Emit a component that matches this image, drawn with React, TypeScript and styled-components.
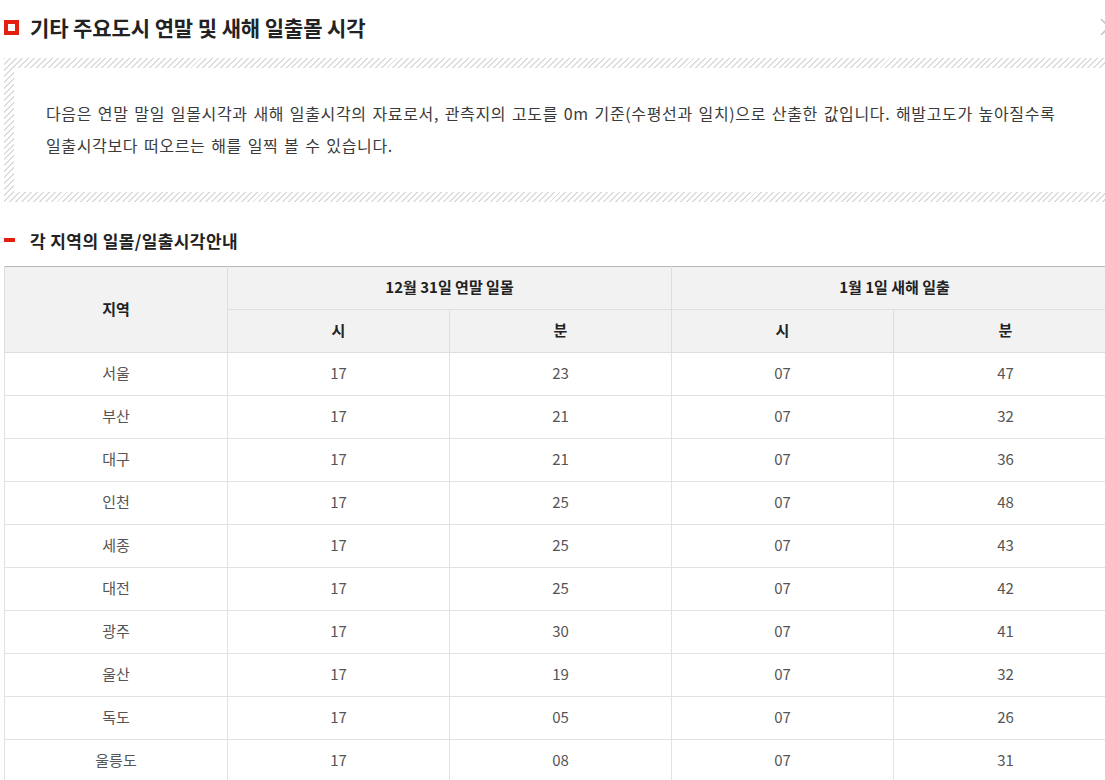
import React from 'react'
import styled, { createGlobalStyle } from 'styled-components'

const GlobalStyle = createGlobalStyle`
  body {
    margin: 0;
    background: #fff;
    font-family: "Noto Sans CJK KR", "Noto Sans", sans-serif;
    color: #333;
  }
`

const Page = styled.div`
  width: 1105px;
  height: 780px;
  overflow: hidden;
  padding-left: 4px;
  box-sizing: border-box;
`

const TitleBar = styled.div`
  position: relative;
  display: flex;
  align-items: center;
  height: 54px;
`

const TitleIcon = styled.span`
  width: 15px;
  height: 15px;
  box-sizing: border-box;
  border: 4px solid #e3200f;
  margin-right: 11px;
  flex-shrink: 0;
`

const Title = styled.h2`
  margin: 0;
  font-size: 21px;
  font-weight: 700;
  letter-spacing: -0.1px;
  color: #222;
  line-height: 1;
`

const NextArrow = styled.svg`
  position: absolute;
  right: -6px;
  top: 17px;
  width: 12px;
  height: 20px;
`

const HatchBox = styled.div`
  width: 1120px;
  margin-top: 4px;
  padding: 10px;
  box-sizing: border-box;
  background: repeating-linear-gradient(
    135deg,
    #dcdcdc 0,
    #dcdcdc 1.4px,
    #fff 1.4px,
    #fff 4.2px
  );
`

const HatchInner = styled.div`
  background: #fff;
  padding: 29px 50px 31px 32px;
  font-size: 16px;
  line-height: 32px;
  color: #3a3a3a;
  letter-spacing: 0.65px;
  word-spacing: 1.5px;
`

const SubHeading = styled.h3`
  display: flex;
  align-items: center;
  margin: 23px 0 0;
  height: 30px;
  font-size: 17px;
  font-weight: 700;
  letter-spacing: 0.4px;
  color: #222;
`

const Dash = styled.span`
  width: 11px;
  height: 4px;
  background: #e3200f;
  margin-right: 15px;
`

const Table = styled.table`
  margin-top: 11px;
  width: 1113px;
  border-collapse: collapse;
  table-layout: fixed;
  border-top: 1px solid #b8b8b8;
  border-left: 1px solid #dedede;
`

const Th = styled.th`
  height: 39px;
  padding: 0 0 3px;
  background: #f2f2f2;
  border: 1px solid #dedede;
  border-top: none;
  font-size: 15px;
  font-weight: 700;
  color: #222;
  text-align: center;
`

const Td = styled.td`
  height: 38px;
  padding: 0 0 4px;
  border: 1px solid #e2e2e2;
  font-size: 15px;
  color: #555;
  text-align: center;
`

const rows = [
  ['서울', '17', '23', '07', '47'],
  ['부산', '17', '21', '07', '32'],
  ['대구', '17', '21', '07', '36'],
  ['인천', '17', '25', '07', '48'],
  ['세종', '17', '25', '07', '43'],
  ['대전', '17', '25', '07', '42'],
  ['광주', '17', '30', '07', '41'],
  ['울산', '17', '19', '07', '32'],
  ['독도', '17', '05', '07', '26'],
  ['울릉도', '17', '08', '07', '31'],
]

export default function App() {
  return (
    <Page>
      <GlobalStyle />
      <TitleBar>
        <TitleIcon />
        <Title>기타 주요도시 연말 및 새해 일출몰 시각</Title>
        <NextArrow viewBox="0 0 12 20">
          <path d="M2 2 L10 10 L2 18" fill="none" stroke="#c8c8c8" strokeWidth="1.6" />
        </NextArrow>
      </TitleBar>
      <HatchBox>
        <HatchInner>
          다음은 연말 말일 일몰시각과 새해 일출시각의 자료로서, 관측지의 고도를 0m 기준(수평선과 일치)으로 산출한 값입니다. 해발고도가 높아질수록
          일출시각보다 떠오르는 해를 일찍 볼 수 있습니다.
        </HatchInner>
      </HatchBox>
      <SubHeading>
        <Dash />
        각 지역의 일몰/일출시각안내
      </SubHeading>
      <Table>
        <colgroup>
          <col style={{ width: 223 }} />
          <col style={{ width: 222 }} />
          <col style={{ width: 222 }} />
          <col style={{ width: 222 }} />
          <col style={{ width: 224 }} />
        </colgroup>
        <thead>
          <tr>
            <Th rowSpan={2}>지역</Th>
            <Th colSpan={2}>12월 31일 연말 일몰</Th>
            <Th colSpan={2}>1월 1일 새해 일출</Th>
          </tr>
          <tr>
            <Th>시</Th>
            <Th>분</Th>
            <Th>시</Th>
            <Th>분</Th>
          </tr>
        </thead>
        <tbody>
          {rows.map((r) => (
            <tr key={r[0]}>
              {r.map((c, i) => (
                <Td key={i}>{c}</Td>
              ))}
            </tr>
          ))}
        </tbody>
      </Table>
    </Page>
  )
}
